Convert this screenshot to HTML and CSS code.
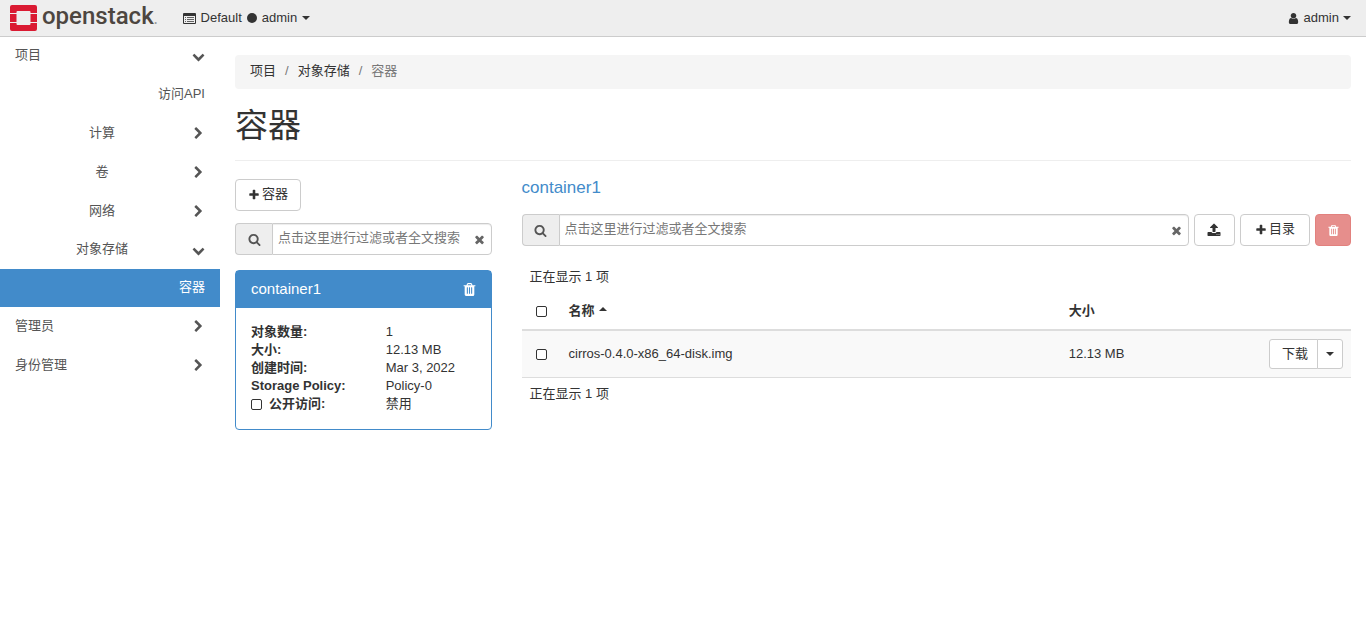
FILE: index.html
```html
<!DOCTYPE html>
<html lang="zh-CN">
<head>
<meta charset="utf-8">
<meta name="viewport" content="width=device-width, initial-scale=1">
<title>容器 - OpenStack Dashboard</title>
<link rel="stylesheet" href="styles.css">
</head>
<body>
<svg class="sprite" aria-hidden="true">
  <symbol id="plus" viewBox="0 0 1792 1792"><path d="M1600 736v192q0 40-28 68t-68 28h-416v416q0 40-28 68t-68 28h-192q-40 0-68-28t-28-68v-416h-416q-40 0-68-28t-28-68v-192q0-40 28-68t68-28h416v-416q0-40 28-68t68-28h192q40 0 68 28t28 68v416h416q40 0 68 28t28 68z"/></symbol>
  <symbol id="search" viewBox="0 0 1792 1792"><path d="M1216 832q0-185-131.500-316.500t-316.500-131.500-316.500 131.500-131.500 316.500 131.500 316.500 316.500 131.500 316.500-131.500 131.500-316.500zm512 832q0 52-38 90t-90 38q-54 0-90-38l-343-342q-179 124-399 124-143 0-273.500-55.500t-225-150-150-225-55.500-273.500 55.500-273.500 150-225 225-150 273.500-55.500 273.500 55.500 225 150 150 225 55.500 273.500q0 220-124 399l343 343q37 37 37 90z"/></symbol>
  <symbol id="times" viewBox="0 0 1792 1792"><path d="M1490 1322q0 40-28 68l-136 136q-28 28-68 28t-68-28l-294-294-294 294q-28 28-68 28t-68-28l-136-136q-28-28-28-68t28-68l294-294-294-294q-28-28-28-68t28-68l136-136q28-28 68-28t68 28l294 294 294-294q28-28 68-28t68 28l136 136q28 28 28 68t-28 68l-294 294 294 294q28 28 28 68z"/></symbol>
  <symbol id="trash" viewBox="0 0 1792 1792"><path d="M704 1376v-704q0-14-9-23t-23-9h-64q-14 0-23 9t-9 23v704q0 14 9 23t23 9h64q14 0 23-9t9-23zm256 0v-704q0-14-9-23t-23-9h-64q-14 0-23 9t-9 23v704q0 14 9 23t23 9h64q14 0 23-9t9-23zm256 0v-704q0-14-9-23t-23-9h-64q-14 0-23 9t-9 23v704q0 14 9 23t23 9h64q14 0 23-9t9-23zm-544-992h448l-48-117q-7-9-17-11h-317q-10 2-17 11zm928 32v64q0 14-9 23t-23 9h-96v948q0 83-47 143.500t-113 60.500h-832q-66 0-113-58.500t-47-141.500v-952h-96q-14 0-23-9t-9-23v-64q0-14 9-23t23-9h309l70-167q15-37 54-63t79-26h320q40 0 79 26t54 63l70 167h309q14 0 23 9t9 23z"/></symbol>
  <symbol id="upload" viewBox="0 0 1792 1792"><path d="M1344 1472q0-26-19-45t-45-19-45 19-19 45 19 45 45 19 45-19 19-45zm256 0q0-26-19-45t-45-19-45 19-19 45 19 45 45 19 45-19 19-45zm128-224v320q0 40-28 68t-68 28h-1472q-40 0-68-28t-28-68v-320q0-40 28-68t68-28h427q21 56 70.500 92t110.500 36h256q61 0 110.500-36t70.500-92h427q40 0 68 28t28 68zm-325-648q-17 40-59 40h-256v448q0 26-19 45t-45 19h-256q-26 0-45-19t-19-45v-448h-256q-42 0-59-40-17-39 14-69l448-448q18-19 45-19t45 19l448 448q31 30 14 69z"/></symbol>
  <symbol id="right" viewBox="0 0 1792 1792"><path d="M1363 877l-742 742q-19 19-45 19t-45-19l-166-166q-19-19-19-45t19-45l531-531-531-531q-19-19-19-45t19-45l166-166q19-19 45-19t45 19l742 742q19 19 19 45t-19 45z"/></symbol>
  <symbol id="down" viewBox="0 0 1792 1792"><path d="M1683 808l-742 741q-19 19-45 19t-45-19l-742-741q-19-19-19-45.500t19-45.500l166-165q19-19 45-19t45 19l531 531 531-531q19-19 45-19t45 19l166 165q19 19 19 45.500t-19 45.500z"/></symbol>
  <symbol id="user" viewBox="0 0 1792 1792"><path d="M1536 1399q0 109-62.500 187t-150.500 78h-854q-88 0-150.500-78t-62.500-187q0-85 8.500-160.500t31.500-152 58.500-131 94-89 134.500-34.500q131 128 313 128t313-128q76 0 134.500 34.500t94 89 58.500 131 31.500 152 8.500 160.500zm-256-887q0 159-112.500 271.500t-271.500 112.500-271.500-112.500-112.500-271.500 112.500-271.500 271.500-112.500 271.500 112.500 112.500 271.500z"/></symbol>
  <symbol id="list" viewBox="0 0 13 11"><path fill-rule="evenodd" d="M1 0h11q1 0 1 1v9q0 1-1 1H1q-1 0-1-1V1q0-1 1-1zM1 3v7h11V3z"/><path opacity=".75" d="M2 4h1v1H2zM4 4h7v1H4zM2 6h1v1H2zM4 6h7v1H4zM2 8h1v1H2zM4 8h7v1H4z"/></symbol>
</svg>

<header class="navbar">
  <a class="brand" href="#">
    <svg class="brand-mark" viewBox="0 0 27 26" aria-hidden="true">
      <path fill="#da1a32" d="M2 0h23q2 0 2 2v6h-6.500V7q0-1-1-1H7.500q-1 0-1 1v1H0V2q0-2 2-2zM0 9h6.500v8H0zM20.500 9H27v8h-6.500zM0 18h6.500v1q0 1 1 1h12q1 0 1-1v-1H27v6q0 2-2 2H2q-2 0-2-2z"/>
    </svg>
    <span class="brand-name">openstack<span class="brand-dot">.</span></span>
  </a>
  <button class="nav-item context" type="button"><svg class="icon-list" aria-hidden="true"><use href="#list"/></svg><span>Default</span><span class="dot"></span><span>admin</span><span class="caret"></span></button>
  <button class="nav-item account" type="button"><svg class="icon" aria-hidden="true"><use href="#user"/></svg><span>admin</span><span class="caret"></span></button>
</header>

<div class="layout">
  <nav class="sidebar" aria-label="导航">
    <a class="side-row open" href="#"><span>项目</span><svg class="chevron"><use href="#down"/></svg></a>
    <a class="side-row leaf" href="#"><span>访问API</span></a>
    <a class="side-row sub" href="#"><span>计算</span><svg class="chevron"><use href="#right"/></svg></a>
    <a class="side-row sub" href="#"><span>卷</span><svg class="chevron"><use href="#right"/></svg></a>
    <a class="side-row sub" href="#"><span>网络</span><svg class="chevron"><use href="#right"/></svg></a>
    <a class="side-row sub open" href="#"><span>对象存储</span><svg class="chevron"><use href="#down"/></svg></a>
    <a class="side-row leaf active" href="#"><span>容器</span></a>
    <a class="side-row" href="#"><span>管理员</span><svg class="chevron"><use href="#right"/></svg></a>
    <a class="side-row" href="#"><span>身份管理</span><svg class="chevron"><use href="#right"/></svg></a>
  </nav>

  <main class="content">
    <ol class="breadcrumb">
      <li><a href="#">项目</a></li>
      <li><a href="#">对象存储</a></li>
      <li>容器</li>
    </ol>
    <h1 class="page-title">容器</h1>

    <div class="columns">
      <section class="containers">
        <button class="btn" type="button"><svg class="icon-plus"><use href="#plus"/></svg><span>容器</span></button>
        <div class="search">
          <span class="search-addon"><svg class="icon"><use href="#search"/></svg></span>
          <input class="search-input" type="text" aria-label="过滤容器" placeholder="点击这里进行过滤或者全文搜索">
          <button class="search-clear" type="button" aria-label="清除"><svg class="icon"><use href="#times"/></svg></button>
        </div>
        <article class="card">
          <header class="card-head">
            <span>container1</span>
            <button class="card-delete" type="button" aria-label="删除容器"><svg class="icon-trash"><use href="#trash"/></svg></button>
          </header>
          <dl class="facts">
            <dt>对象数量:</dt><dd>1</dd>
            <dt>大小:</dt><dd>12.13 MB</dd>
            <dt>创建时间:</dt><dd>Mar 3, 2022</dd>
            <dt>Storage Policy:</dt><dd>Policy-0</dd>
            <dt><label class="access"><input class="check" type="checkbox">公开访问:</label></dt><dd>禁用</dd>
          </dl>
        </article>
      </section>

      <section class="objects">
        <a class="path" href="#">container1</a>
        <div class="toolbar">
          <div class="search">
            <span class="search-addon"><svg class="icon"><use href="#search"/></svg></span>
            <input class="search-input" type="text" aria-label="过滤对象" placeholder="点击这里进行过滤或者全文搜索">
            <button class="search-clear" type="button" aria-label="清除"><svg class="icon"><use href="#times"/></svg></button>
          </div>
          <button class="btn btn-upload" type="button" aria-label="上传"><svg class="icon-upload"><use href="#upload"/></svg></button>
          <button class="btn btn-folder" type="button"><svg class="icon-plus"><use href="#plus"/></svg><span>目录</span></button>
          <button class="btn btn-danger" type="button" aria-label="删除" disabled><svg class="icon"><use href="#trash"/></svg></button>
        </div>
        <p class="count">正在显示 1 项</p>
        <table class="table">
          <thead>
            <tr>
              <th class="col-check"><input class="check" type="checkbox" aria-label="全选"></th>
              <th>名称<span class="caret caret-up"></span></th>
              <th class="col-size">大小</th>
              <th class="col-action"></th>
            </tr>
          </thead>
          <tbody>
            <tr>
              <td><input class="check" type="checkbox" aria-label="选择 cirros-0.4.0-x86_64-disk.img"></td>
              <td>cirros-0.4.0-x86_64-disk.img</td>
              <td>12.13 MB</td>
              <td><div class="split"><button class="split-main" type="button">下载</button><button class="split-toggle" type="button" aria-label="更多"><span class="caret"></span></button></div></td>
            </tr>
          </tbody>
        </table>
        <p class="count count-foot">正在显示 1 项</p>
      </section>
    </div>
  </main>
</div>
</body>
</html>
```
FILE: styles.css
```css
* { box-sizing: border-box; }

body {
  margin: 0;
  background: #fff;
  color: #333;
  font: 13px/18px "Liberation Sans", Arial, "Noto Sans CJK SC", sans-serif;
}

button, input { font: inherit; color: inherit; }
button { cursor: pointer; }
a { color: inherit; text-decoration: none; }
svg { display: block; flex: none; fill: currentColor; }

.sprite { position: absolute; width: 0; height: 0; }
.icon { width: 13px; height: 13px; }
.icon-plus { width: 12px; height: 12px; }
.icon-upload { width: 14px; height: 14px; }

.caret {
  display: inline-block;
  border: 4px solid transparent;
  border-top-color: currentColor;
  border-bottom: 0;
}
.caret-up {
  margin-left: 4px;
  border-top: 0;
  border-bottom: 4px solid currentColor;
  vertical-align: 4px;
}

/* Top bar */
.navbar {
  display: flex;
  align-items: center;
  height: 37px;
  padding: 0 15px 0 10px;
  background: #eee;
  border-bottom: 1px solid #ccc;
}
.brand { display: flex; align-items: center; gap: 5px; margin-right: 25px; }
.brand-mark { width: 27px; height: 26px; }
.brand-name { color: #4d4640; font: 500 24px/32px Roboto, sans-serif; padding-bottom: 2px; }
.brand-dot { color: #999; font-size: 14px; }
.nav-item {
  display: flex;
  align-items: center;
  gap: 4px;
  padding: 0;
  border: 0;
  background: none;
}
.context { gap: 5px; }
.account { margin-left: auto; }
.icon-list { width: 13px; height: 11px; }
.dot { width: 10px; height: 10px; border-radius: 50%; background: #333; }

/* Side navigation */
.layout { display: flex; }
.sidebar { flex: none; width: 220px; }
.side-row {
  display: flex;
  align-items: center;
  justify-content: space-between;
  gap: 3px;
  height: 39px;
  padding: 0 15px;
  color: #555;
}
.side-row span { padding-bottom: 2px; }
.open, .active { height: 38px; }
.sub span { flex: 1; text-align: center; }
.leaf { justify-content: flex-end; }
.active { background: #428bca; color: #fff; }
.chevron { width: 13px; height: 13px; }

/* Content */
.content { flex: 1; min-width: 0; padding: 18px 15px; }
.breadcrumb {
  display: flex;
  margin: 0 0 18px;
  padding: 7px 15px 9px;
  border-radius: 4px;
  background: #f5f5f5;
  color: #777;
  list-style: none;
}
.breadcrumb a { color: #333; }
.breadcrumb li + li::before { content: "/"; padding: 0 9px; }
.page-title {
  margin: 0 0 18px;
  padding: 1px 0 16px;
  border-bottom: 1px solid #eee;
  font-size: 33px;
  line-height: 36px;
  font-weight: 400;
}
.columns { display: grid; grid-template-columns: repeat(12, 1fr); gap: 30px; }
.containers { grid-column: span 3; }
.objects { grid-column: span 9; }

.btn {
  display: inline-flex;
  align-items: center;
  justify-content: center;
  gap: 2px;
  height: 32px;
  padding: 0 12px;
  border: 1px solid #ccc;
  border-radius: 4px;
  background: #fff;
}
.btn span { padding-bottom: 2px; }
.btn-upload { min-width: 41px; }
.btn-folder { padding: 0 14px; }
.btn-danger { min-width: 36px; padding: 0 10px; border-color: #d43f3a; background: #d9534f; color: #fff; opacity: .65; }

.search { display: flex; position: relative; height: 32px; }
.search-addon {
  display: flex;
  align-items: center;
  justify-content: center;
  width: 37px;
  border: 1px solid #ccc;
  border-right: 0;
  border-radius: 4px 0 0 4px;
  background: #eee;
  color: #555;
}
.search-input {
  flex: 1;
  min-width: 0;
  padding: 0 30px 2px 5px;
  border: 1px solid #ccc;
  border-radius: 0 4px 4px 0;
  background: #fff;
  box-shadow: inset 0 1px 1px rgba(0, 0, 0, .075);
}
.search-input::placeholder { color: #777; opacity: 1; }
.search-clear {
  position: absolute;
  top: 10px;
  right: 6px;
  padding: 0;
  border: 0;
  background: none;
  color: #666;
}

.check {
  appearance: none;
  flex: none;
  display: block;
  width: 11px;
  height: 11px;
  margin: 0;
  border: 1px solid #333;
  border-radius: 2px;
  background: #fff;
}

/* Container card */
.containers .search { margin: 12px 0 15px; }
.card { border: 1px solid #428bca; border-radius: 4px; }
.card-head {
  display: flex;
  align-items: center;
  justify-content: space-between;
  height: 37px;
  padding: 0 14px 1px 15px;
  background: #428bca;
  color: #fff;
  font-size: 15px;
}
.card-delete { padding: 0; border: 0; background: none; color: #fff; }
.icon-trash { width: 15px; height: 15px; }
.facts { display: grid; grid-template-columns: 3fr 2fr; margin: 0; padding: 15px 15px 16px; }
.facts dt { font-weight: 700; white-space: nowrap; }
.facts dd { margin: 0; white-space: nowrap; }
.access { display: flex; align-items: center; gap: 7px; }

/* Object list */
.path { display: block; color: #428bca; font-size: 17px; }
.toolbar { display: flex; gap: 5px; margin: 17px 0 22px; }
.toolbar .search { flex: 1; }
.count { margin: 0; padding: 0 8px; }
.count-foot { padding-top: 7px; }
.table { width: 100%; border-collapse: collapse; table-layout: fixed; }
.table th, .table td { padding: 8px; text-align: left; vertical-align: middle; }
.table th { height: 44px; padding-top: 15px; border-bottom: 2px solid #ddd; }
.table td { height: 47px; border-bottom: 1px solid #ddd; background: #f9f9f9; }
.table .check { margin-left: 6px; }
.col-check { width: 39px; }
.col-size { width: 21%; }
.col-action { width: 14%; }
.split { display: flex; justify-content: flex-end; }
.split button { height: 30px; border: 1px solid #ccc; background: #fff; }
.split-main { padding: 0 9px 0 12px; border-radius: 3px 0 0 3px; }
.split .split-toggle { display: flex; align-items: center; padding: 0 8px; margin-left: -1px; border-radius: 0 3px 3px 0; }
```
